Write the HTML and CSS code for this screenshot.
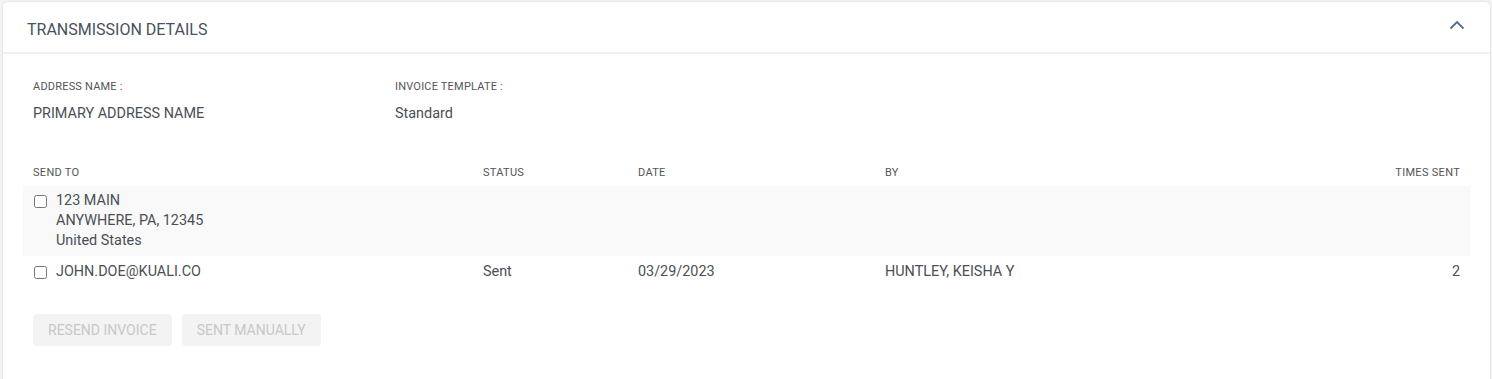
FILE: index.html
```html
<!DOCTYPE html>
<html>

<head>
    <title>Transmission Details</title>
    <link rel="stylesheet" href="styles.css">
</head>

<body>
    <div class="card">
        <!-- Card header -->
        <div class="card-header">
            <h2>Transmission Details</h2>
            <svg class="chevron" width="16" height="10" viewBox="0 0 16 10">
                <path d="M1.5 8.5 L8 2 L14.5 8.5" fill="none" stroke="#4f6f8f" stroke-width="1.8" />
            </svg>
        </div>

        <div class="card-body">
            <!-- Address / template info -->
            <div class="info">
                <div class="info-item">
                    <div class="info-label">Address Name :</div>
                    <div class="info-value">PRIMARY ADDRESS NAME</div>
                </div>
                <div class="info-item">
                    <div class="info-label">Invoice Template :</div>
                    <div class="info-value">Standard</div>
                </div>
            </div>

            <!-- Send to table -->
            <div class="send-table">
                <div class="row head">
                    <div>Send To</div>
                    <div>Status</div>
                    <div>Date</div>
                    <div>By</div>
                    <div class="num">Times Sent</div>
                </div>
                <div class="row shaded">
                    <div class="send-to">
                        <input type="checkbox" />
                        <div>
                            123 MAIN<br>
                            ANYWHERE, PA, 12345<br>
                            United States
                        </div>
                    </div>
                    <div></div>
                    <div></div>
                    <div></div>
                    <div class="num"></div>
                </div>
                <div class="row">
                    <div class="send-to">
                        <input type="checkbox" />
                        <div>JOHN.DOE@KUALI.CO</div>
                    </div>
                    <div>Sent</div>
                    <div>03/29/2023</div>
                    <div>HUNTLEY, KEISHA Y</div>
                    <div class="num">2</div>
                </div>
            </div>

            <!-- Actions -->
            <div class="actions">
                <button disabled>Resend Invoice</button>
                <button disabled>Sent Manually</button>
            </div>
        </div>
    </div>
</body>

</html>
```

FILE: styles.css
```css
/* Page */
body {
    font-family: Roboto, "Liberation Sans", sans-serif;
    margin: 0;
    padding: 2px 2px 0 3px;
    background-color: #f4f4f4;
    color: #4a4f55;
}
.card {
    background-color: #fff;
    border-radius: 5px;
    box-shadow: 0 0 3px rgba(0, 0, 0, 0.12);
    height: 420px;
}

/* Header */
.card-header {
    display: flex;
    justify-content: space-between;
    align-items: center;
    height: 50px;
    padding: 0 25px 0 24px;
    border-bottom: 2px solid #f0f0f0;
}
.card-header h2 {
    margin: 4px 0 0 0;
    font-size: 16px;
    font-weight: 400;
    text-transform: uppercase;
    color: #46525e;
}
.chevron {
    margin-top: -4px;
}

/* Body */
.card-body {
    padding: 25px 20px 0 20px;
}
.info {
    display: flex;
    padding: 0 10px;
}
.info-item {
    width: 362px;
}
.info-label {
    font-size: 11px;
    letter-spacing: 0.2px;
    line-height: 16px;
    text-transform: uppercase;
    color: #555;
}
.info-value {
    margin-top: 9px;
    font-size: 14.4px;
    line-height: 20px;
    color: #4a4f55;
}

/* Table */
.send-table {
    margin-top: 41px;
}
.row {
    display: grid;
    grid-template-columns: 450px 155px 247px 1fr auto;
    padding: 6px 10px 4px 10px;
    font-size: 14.4px;
    line-height: 20px;
}
.row.head {
    padding: 0 10px 5px 10px;
    font-size: 11px;
    letter-spacing: 0.3px;
    line-height: 16px;
    text-transform: uppercase;
    color: #555;
}
.row.shaded {
    padding: 5px 10px 5px 10px;
    background-color: #f9f9f9;
}
.num {
    text-align: right;
}
.send-to {
    display: flex;
    align-items: flex-start;
}
.send-to input {
    margin: 4px 9px 0 1px;
    width: 13px;
    height: 13px;
}

/* Buttons */
.actions {
    display: flex;
    gap: 10px;
    margin-top: 28px;
    padding: 0 10px;
}
.actions button {
    font-family: Roboto, "Liberation Sans", sans-serif;
    font-size: 14px;
    text-transform: uppercase;
    height: 32px;
    padding: 0 15px;
    border: none;
    border-radius: 4px;
    background-color: #f3f3f3;
    color: #c8c8c8;
}
```
